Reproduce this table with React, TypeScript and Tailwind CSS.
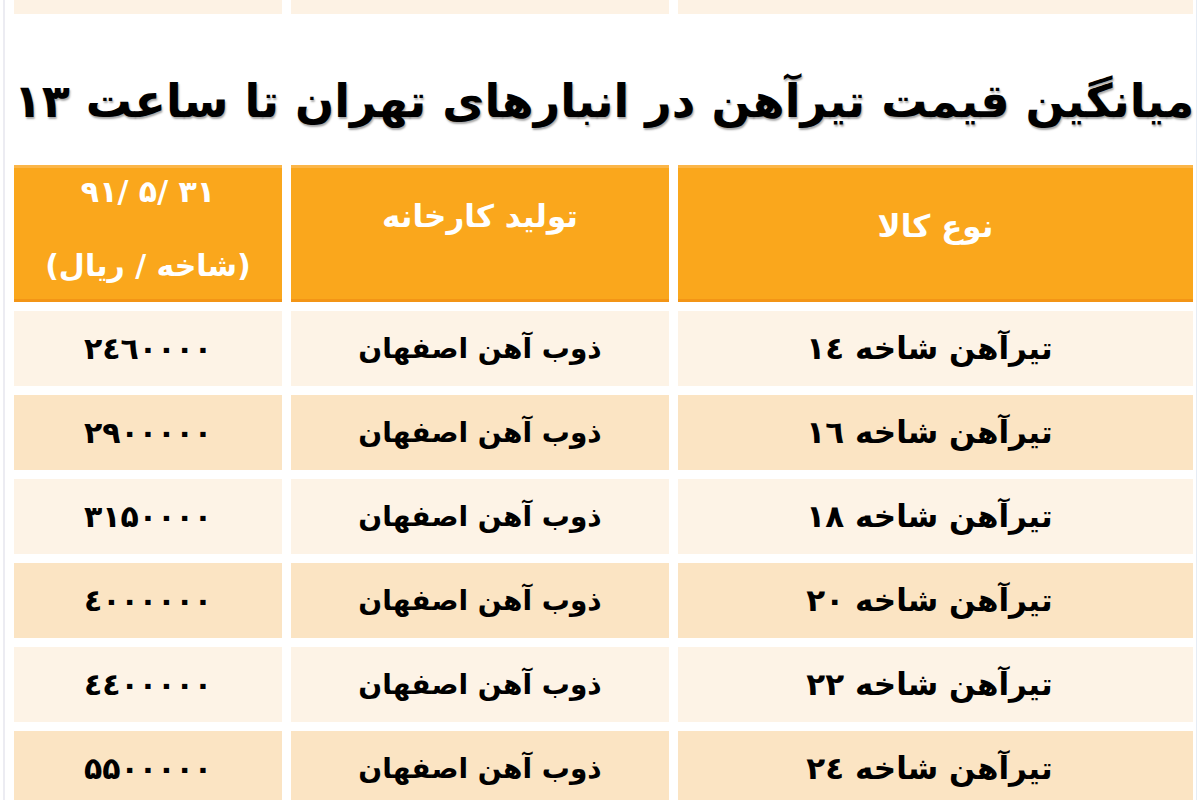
import React from "react";

const rows = [
  { name: "تیرآهن شاخه ۱٤", maker: "ذوب آهن اصفهان", price: "۲٤٦۰۰۰۰" },
  { name: "تیرآهن شاخه ۱٦", maker: "ذوب آهن اصفهان", price: "۲۹۰۰۰۰۰" },
  { name: "تیرآهن شاخه ۱۸", maker: "ذوب آهن اصفهان", price: "۳۱۵۰۰۰۰" },
  { name: "تیرآهن شاخه ۲۰", maker: "ذوب آهن اصفهان", price: "٤۰۰۰۰۰۰" },
  { name: "تیرآهن شاخه ۲۲", maker: "ذوب آهن اصفهان", price: "٤٤۰۰۰۰۰" },
  { name: "تیرآهن شاخه ۲٤", maker: "ذوب آهن اصفهان", price: "۵۵۰۰۰۰۰" },
];

const grid = "grid grid-cols-[515px_378px_268px] gap-x-[9px]";

export default function App() {
  return (
    <div
      dir="rtl"
      className="w-[1200px] h-[800px] overflow-hidden bg-white relative"
      style={{ fontFamily: '"DejaVu Sans", sans-serif' }}
    >
      <div className="absolute left-[3px] top-0 bottom-0 w-[2px] bg-[#ececf2]" />
      <div className="absolute right-[3px] top-0 bottom-0 w-[1px] bg-[#e6ecf4]" />
      <div className="pr-[7px] pl-[14px]">
        {/* partial top row */}
        <div className={`${grid} h-[14px]`}>
          <div className="bg-[#fdf2e4]" />
          <div className="bg-[#fdf2e4]" />
          <div className="bg-[#fdf2e4]" />
        </div>

        {/* title */}
        <div className="h-[151px] flex items-center justify-center -mr-[5px] -ml-[4px] pt-[22px]">
          <h1
            className="text-[46px] font-bold text-black whitespace-nowrap leading-none"
            style={{ textShadow: "1px 2px 2px rgba(0,0,0,0.35)" }}
          >
            میانگین قیمت تیرآهن در انبارهای تهران تا ساعت ۱۳
          </h1>
        </div>

        {/* header */}
        <div className={`${grid} h-[137px]`}>
          <div className="bg-[#faa71c] border-y-[3px] border-t-[#fbb649] border-b-[#f39516] flex items-center justify-center pb-[14px] text-white font-bold text-[31px]">
            نوع کالا
          </div>
          <div className="bg-[#faa71c] border-y-[3px] border-t-[#fbb649] border-b-[#f39516] flex items-center justify-center pb-[34px] text-white font-bold text-[31px]">
            تولید کارخانه
          </div>
          <div className="bg-[#faa71c] border-y-[3px] border-t-[#fbb649] border-b-[#f39516] flex flex-col items-center justify-center gap-[44px] text-white font-bold text-[30px] leading-none pb-[10px]">
            <span dir="ltr" className="tracking-[2px]">۹۱/ ۵/ ۳۱</span>
            <span>(شاخه / ریال)</span>
          </div>
        </div>

        {/* data rows */}
        <div className="mt-[9px] flex flex-col gap-[9px]">
          {rows.map((r, i) => {
            const bg = i % 2 === 0 ? "bg-[#fdf3e6]" : "bg-[#fbe4c3]";
            return (
              <div key={i} className={`${grid} h-[75px] text-black font-bold`}>
                <div className={`${bg} flex items-center justify-center text-[31px] pr-[12px]`}>{r.name}</div>
                <div className={`${bg} flex items-center justify-center text-[28px]`}>{r.maker}</div>
                <div className={`${bg} flex items-center justify-center text-[30px] tracking-[10px]`}>{r.price}</div>
              </div>
            );
          })}
        </div>
      </div>
    </div>
  );
}
